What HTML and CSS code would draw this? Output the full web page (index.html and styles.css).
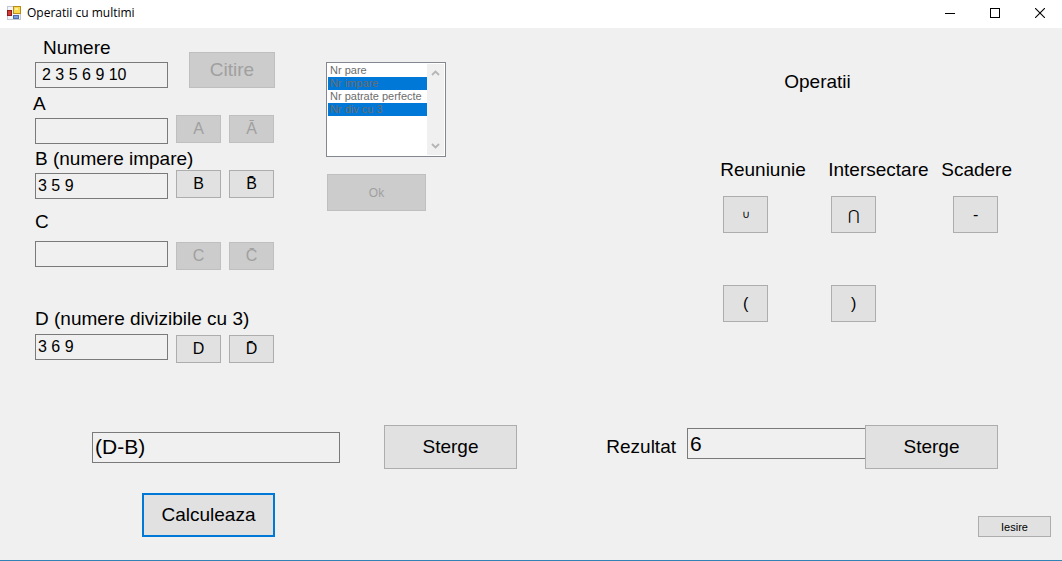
FILE: index.html
```html
<!DOCTYPE html>
<html lang="ro">
<head>
<meta charset="utf-8">
<title>Operatii cu multimi</title>
<link rel="stylesheet" href="styles.css">
</head>
<body>
<div class="window">
  <header class="titlebar">
    <svg class="app-icon" width="14" height="14" viewBox="0 0 14 14" aria-hidden="true">
      <rect x="0.5" y="0.5" width="13" height="13" fill="#f3f4f8" stroke="#c3c7d2"/>
      <rect x="6.500" y="0.500" width="7" height="7" fill="#fbd94b" stroke="#b98a1c"/>
      <rect x="8" y="2" width="3" height="2" fill="#fff0a0"/>
      <rect x="0.5" y="4.5" width="4" height="5" fill="#d23a34" stroke="#8f1a1c"/>
      <rect x="6.5" y="9.5" width="5" height="3" fill="#7d9fdc" stroke="#4a6cb0"/>
    </svg>
    <span class="title">Operatii cu multimi</span>
    <div class="controls">
      <button type="button" class="control" aria-label="Minimize"><svg width="10" height="10" viewBox="0 0 10 10"><path d="M0 5.5H10" stroke="#000"/></svg></button>
      <button type="button" class="control" aria-label="Maximize"><svg width="10" height="10" viewBox="0 0 10 10"><rect x="0.5" y="0.5" width="9" height="9" fill="none" stroke="#000"/></svg></button>
      <button type="button" class="control" aria-label="Close"><svg width="10" height="10" viewBox="0 0 10 10"><path d="M0 0L10 10M10 0L0 10" stroke="#000" stroke-width="1.1"/></svg></button>
    </div>
  </header>

  <main class="form">
    <div class="top">
      <section class="sets">
        <div class="source">
          <div class="source-field">
            <label class="label label-indent" for="numere">Numere</label>
            <input class="box box-indent" id="numere" type="text" value="2 3 5 6 9 10" readonly>
          </div>
          <button type="button" class="btn btn-read" disabled>Citire</button>
        </div>
        <div class="set set-a">
          <label class="label label-outdent" for="set-a">A</label>
          <div class="row row-raised">
            <input class="box" id="set-a" type="text" readonly>
            <button type="button" class="btn btn-set" disabled>A</button>
            <button type="button" class="btn btn-set" disabled>A&#772;</button>
          </div>
        </div>
        <div class="set">
          <label class="label" for="set-b">B (numere impare)</label>
          <div class="row row-raised">
            <input class="box" id="set-b" type="text" value="3 5 9" readonly>
            <button type="button" class="btn btn-set">B</button>
            <button type="button" class="btn btn-set">B&#772;</button>
          </div>
        </div>
        <div class="set set-c">
          <label class="label" for="set-c">C</label>
          <div class="row">
            <input class="box" id="set-c" type="text" readonly>
            <button type="button" class="btn btn-set" disabled>C</button>
            <button type="button" class="btn btn-set" disabled>C&#772;</button>
          </div>
        </div>
        <div class="set set-d">
          <label class="label" for="set-d">D (numere divizibile cu 3)</label>
          <div class="row">
            <input class="box" id="set-d" type="text" value="3 6 9" readonly>
            <button type="button" class="btn btn-set">D</button>
            <button type="button" class="btn btn-set">D&#772;</button>
          </div>
        </div>
      </section>

      <section class="filter">
        <div class="listbox">
          <select class="list" size="7" multiple disabled aria-label="Filtre">
            <option>Nr pare</option>
            <option selected>Nr impare</option>
            <option>Nr patrate perfecte</option>
            <option selected>Nr div cu 3</option>
          </select>
          <div class="scrollbar" aria-hidden="true">
            <svg width="9" height="6" viewBox="0 0 9 6"><path d="M1 5L4.500 1.500L8 5" fill="none" stroke="#b5b5b5" stroke-width="1.800"/></svg>
            <svg width="9" height="6" viewBox="0 0 9 6"><path d="M1 1L4.500 4.500L8 1" fill="none" stroke="#b5b5b5" stroke-width="1.800"/></svg>
          </div>
        </div>
        <button type="button" class="btn btn-ok" disabled>Ok</button>
      </section>

      <section class="operations">
        <h2 class="label heading">Operatii</h2>
        <div class="op-grid">
          <span class="label">Reuniunie</span>
          <span class="label">Intersectare</span>
          <span class="label">Scadere</span>
          <button type="button" class="btn btn-op op-union" aria-label="Reuniunie">∪</button>
          <button type="button" class="btn btn-op op-intersection" aria-label="Intersectare">⋂</button>
          <button type="button" class="btn btn-op op-minus" aria-label="Scadere">-</button>
          <button type="button" class="btn btn-op op-second">(</button>
          <button type="button" class="btn btn-op op-second">)</button>
        </div>
      </section>
    </div>

    <div class="bottom">
      <div class="expression">
        <input class="box box-large" type="text" value="(D-B)" aria-label="Expresie" readonly>
        <button type="button" class="btn btn-wide">Sterge</button>
      </div>
      <div class="result">
        <label class="label" for="rezultat">Rezultat</label>
        <input class="box box-large" id="rezultat" type="text" value="6" readonly>
        <button type="button" class="btn btn-wide">Sterge</button>
      </div>
    </div>

    <div class="actions">
      <button type="button" class="btn btn-wide btn-default">Calculeaza</button>
      <button type="button" class="btn btn-exit">Iesire</button>
    </div>
  </main>
</div>
</body>
</html>
```

FILE: styles.css
```css
* {
  box-sizing: border-box;
}

body {
  margin: 0;
  background: #f0f0f0;
  color: #000;
  font-family: "Liberation Sans", Arial, sans-serif;
  font-size: 16px;
}

button,
input,
select {
  margin: 0;
  font-family: inherit;
  font-size: inherit;
  color: inherit;
}

.window {
  display: flex;
  flex-direction: column;
  min-height: 100vh;
  border-bottom: 1px solid #2f84b5;
}

/* Title bar */
.titlebar {
  display: flex;
  align-items: center;
  height: 28px;
  padding: 0 0 3px 7px;
  background: #fff;
}

.app-icon {
  flex: none;
}

.title {
  margin-left: 6px;
  font-family: "Open Sans", "Segoe UI", sans-serif;
  font-size: 12px;
  line-height: 16px;
}

.controls {
  display: flex;
  margin-left: auto;
}

.control {
  display: grid;
  place-items: center;
  width: 45px;
  height: 24px;
  padding: 0;
  border: 0;
  background: transparent;
}

/* Shared controls */
.label {
  display: block;
  margin: 0;
  font-size: 19px;
  font-weight: 400;
  line-height: 24px;
  white-space: nowrap;
}

.box {
  width: 133px;
  height: 26px;
  padding: 0 2px;
  border: 1px solid #7a7a7a;
  border-radius: 0;
  background: #f0f0f0;
  outline: 0;
}

.box-indent {
  padding-left: 6px;
}

.box-large {
  height: 31px;
  font-size: 21px;
}

.btn {
  flex: none;
  padding: 0;
  border: 1px solid #adadad;
  border-radius: 0;
  background: #e1e1e1;
}

.btn:disabled {
  border-color: #bfbfbf;
  background: #ccc;
  color: #a0a0a0;
}

.form {
  display: flex;
  flex: 1;
  flex-direction: column;
  padding-bottom: 23px;
}

.top {
  display: flex;
  align-items: flex-start;
  padding: 8px 50px 0 35px;
}

/* Number sets */
.sets {
  width: 240px;
}

.source {
  display: flex;
  align-items: flex-end;
  justify-content: space-between;
}

.source-field {
  display: flex;
  flex-direction: column;
  gap: 2px;
}

.label-indent {
  padding-left: 8px;
}

.label-outdent {
  margin-left: -2px;
}

.btn-read {
  width: 86px;
  height: 36px;
  font-size: 19px;
}

.set {
  margin-top: 3px;
}

.row {
  display: flex;
  gap: 8px;
  align-items: flex-end;
  height: 29px;
}

.row .box {
  align-self: flex-start;
}

.row-raised {
  align-items: flex-start;
  margin-top: -1px;
}

.row-raised .box {
  align-self: flex-end;
}

.btn-set {
  width: 45px;
  height: 28px;
}

.set-a {
  margin-top: 4px;
}

.set-c {
  margin-top: 11px;
}

.set-c .row {
  margin-top: 7px;
}

.set-d {
  margin-top: 37px;
}

.set-d .row {
  margin-top: 3px;
}

/* Filter list */
.filter {
  margin: 26px 0 0 51px;
}

.listbox {
  display: flex;
  width: 120px;
  height: 95px;
  padding: 1px;
  border: 1px solid #828790;
  background: #fff;
}

.list {
  flex: 1;
  min-width: 0;
  height: 91px;
  padding: 0;
  border: 0;
  border-radius: 0;
  overflow: hidden;
  background: #fff;
  font-size: 11px;
  opacity: 1;
}

.list option {
  min-height: 13px;
  padding: 0 2px;
  line-height: 13px;
  color: #6d6d6d;
}

.list option:checked {
  background: linear-gradient(#0078d7, #0078d7);
  color: #6d6d6d;
}

.scrollbar {
  display: flex;
  flex-direction: column;
  align-items: center;
  justify-content: space-between;
  width: 17px;
  padding: 6px 0;
  background: #f0f0f0;
}

.btn-ok {
  display: block;
  width: 99px;
  height: 37px;
  margin: 17px 0 0 1px;
  font-size: 12px;
}

/* Operations */
.operations {
  margin: 34px 0 0 auto;
}

.heading {
  padding-left: 64px;
}

.op-grid {
  display: grid;
  grid-template-columns: 108px 113px auto;
  margin-top: 64px;
}

.btn-op {
  width: 45px;
  height: 37px;
  margin: 14px 0 0 3px;
}

.op-union {
  font-size: 11px;
}

.op-intersection {
  font-size: 14px;
}

.op-minus {
  margin-left: 12px;
}

.op-second {
  margin-top: 52px;
}

/* Expression and result */
.bottom {
  display: flex;
  justify-content: space-between;
  margin-top: auto;
  padding: 0 64px 0 92px;
}

.expression,
.result {
  display: flex;
  align-items: center;
}

.expression .box {
  width: 248px;
  margin-right: 44px;
}

.result .label {
  margin-right: 11px;
}

.result .box {
  align-self: flex-start;
  width: 178px;
  margin-top: 3px;
  border-right: 0;
}

.btn-wide {
  width: 133px;
  height: 44px;
  font-size: 19px;
}

.actions {
  display: flex;
  align-items: flex-end;
  justify-content: space-between;
  margin-top: 24px;
  padding: 0 11px 0 142px;
}

.btn-default {
  border: 2px solid #0078d7;
}

.btn-exit {
  width: 73px;
  height: 21px;
  font-size: 11px;
}
```
